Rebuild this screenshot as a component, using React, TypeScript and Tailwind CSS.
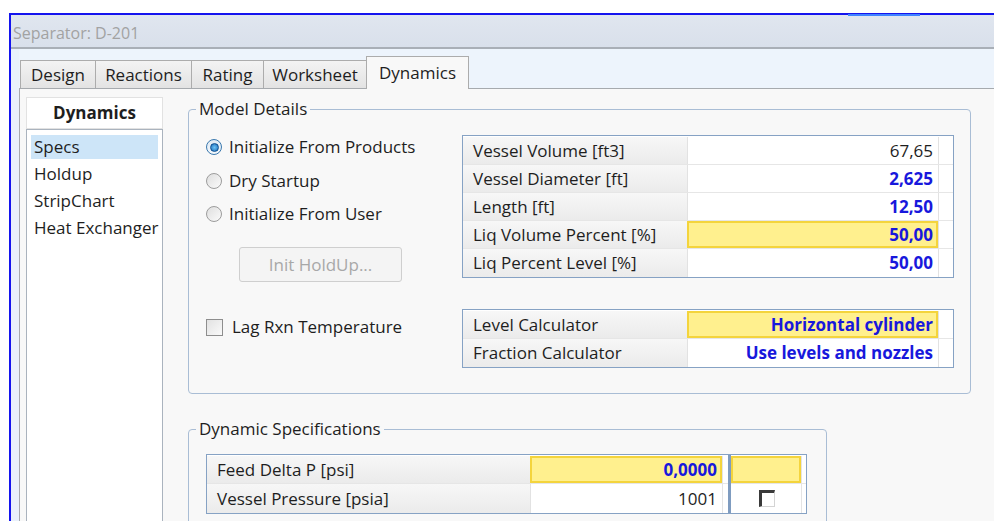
import React from 'react';

type Tone = 'calc' | 'spec' | 'focus';

interface PropRow {
  label: string;
  value: string;
  tone: Tone;
}

const modelRows: PropRow[] = [
  { label: 'Vessel Volume [ft3]', value: '67,65', tone: 'calc' },
  { label: 'Vessel Diameter [ft]', value: '2,625', tone: 'spec' },
  { label: 'Length [ft]', value: '12,50', tone: 'spec' },
  { label: 'Liq Volume Percent [%]', value: '50,00', tone: 'focus' },
  { label: 'Liq Percent Level [%]', value: '50,00', tone: 'spec' },
];

const calcRows: PropRow[] = [
  { label: 'Level Calculator', value: 'Horizontal cylinder', tone: 'focus' },
  { label: 'Fraction Calculator', value: 'Use levels and nozzles', tone: 'spec' },
];

const tabs = [
  { label: 'Design', w: 'w-[76px]' },
  { label: 'Reactions', w: 'w-[97px]' },
  { label: 'Rating', w: 'w-[73px]' },
  { label: 'Worksheet', w: 'w-[104px]' },
];

const pages = ['Specs', 'Holdup', 'StripChart', 'Heat Exchanger'];

export default function App() {
  return (
    <div className="w-[994px] h-[521px] overflow-hidden bg-white pt-[13px] pl-[9px] font-['Open_Sans','Noto_Sans',sans-serif] text-[17px] text-[#1e1e1e]">
      <div className="relative flex h-full flex-col border-l-2 border-t-2 border-[#1414ee]">
        <div className="absolute -top-[1px] left-[837px] h-[2px] w-[72px] bg-[#3f82ff]" />

        {/* title bar */}
        <div className="flex h-[34px] shrink-0 items-center border-b-2 border-[#a9afb7] bg-linear-to-b from-[#e0e6ef] to-[#d9e0eb] pl-[2px] pt-[3px] text-[16px] text-[#a2a2a2]">
          Separator: D-201
        </div>

        <div className="flex flex-1 flex-col bg-[#e9f1fb] pl-[8px]">
          {/* tab strip */}
          <div className="flex h-[39px] shrink-0 items-end bg-[#edf4fc] pl-px">
            {tabs.map((t) => (
              <div
                key={t.label}
                className={`${t.w} -mr-px flex h-[28px] items-center justify-center border border-b-0 border-[#acacac] bg-linear-to-b from-[#f3f3f3] to-[#e3e3e3] pt-px`}
              >
                {t.label}
              </div>
            ))}
            <div className="relative z-10 -mb-px flex h-[33px] w-[103px] items-center justify-center border border-b-0 border-[#acacac] bg-[#f8f8f8] pb-[1px]">
              Dynamics
            </div>
          </div>

          {/* page body */}
          <div className="flex flex-1 border-l border-t border-[#a6aaae] bg-[#f8f8f8] pl-[6px] pt-[8px]">
            <div className="flex w-[137px] shrink-0 flex-col">
              <div className="flex h-[32px] items-center justify-center border border-[#e2e2e2] bg-white font-bold">
                Dynamics
              </div>
              <div className="flex flex-1 flex-col gap-[3px] border border-[#aab3be] bg-white px-[4px] pt-[5px]">
                {pages.map((p, i) => (
                  <div
                    key={p}
                    className={`flex h-[24px] items-center whitespace-nowrap px-[3px] ${i === 0 ? 'bg-[#cde5f8]' : ''}`}
                  >
                    {p}
                  </div>
                ))}
              </div>
            </div>

            <div className="ml-[25px] flex flex-col">
              <GroupBox title="Model Details" className="mt-[1px] w-[783px] pb-[25px]">
                <div className="flex items-start pl-[17px] pt-[15px]">
                  <div className="flex w-[256px] flex-col">
                    <div className="mt-px flex flex-col gap-[11.5px]">
                      <Radio label="Initialize From Products" checked />
                      <Radio label="Dry Startup" />
                      <Radio label="Initialize From User" />
                    </div>
                    <button className="ml-[33px] mt-[22px] h-[35px] w-[163px] rounded-[3px] border border-[#cfcfcf] bg-[#f4f4f4] text-[#a8a8a8]">
                      Init HoldUp...
                    </button>
                    <div className="mt-[34px] flex h-[22px] items-center">
                      <div className="h-[17px] w-[17px] border border-[#8e8e8e] bg-linear-to-br from-[#e2e2e2] to-[#fafafa]" />
                      <span className="ml-[9px]">Lag Rxn Temperature</span>
                    </div>
                  </div>
                  <div className="flex flex-col gap-[31px]">
                    <PropTable rows={modelRows} />
                    <PropTable rows={calcRows} />
                  </div>
                </div>
              </GroupBox>

              <GroupBox title="Dynamic Specifications" className="mt-[24px] h-[200px] w-[639px]">
                <div className="pl-[17px] pt-[14px]">
                  <div className="flex w-[601px] border border-[#86a2c4] bg-white pt-px">
                    <div className="flex flex-col">
                      <div className="flex h-[28px] border-b border-[#e6e6e6]">
                        <LabelCell label="Feed Delta P [psi]" width="w-[323px]" />
                        <ValueCell value="0,0000" tone="focus" width="w-[192px]" />
                        <div className="w-[6px] border-l border-[#e4e4e4]" />
                      </div>
                      <div className="flex h-[29px]">
                        <LabelCell label="Vessel Pressure [psia]" width="w-[323px]" />
                        <ValueCell value="1001" tone="calc" width="w-[192px]" />
                        <div className="w-[6px] border-l border-[#e4e4e4]" />
                      </div>
                    </div>
                    <div className="-mt-px w-[3px] bg-[#7f9cc0]" />
                    <div className="flex flex-col">
                      <div className="flex h-[28px] border-b border-[#e6e6e6]">
                        <div className="w-[70px] border-2 border-[#f4d43c] bg-[#fff08e]" />
                        <div className="w-[5px] border-l border-[#e4e4e4]" />
                      </div>
                      <div className="flex h-[29px]">
                        <div className="flex w-[70px] items-center justify-center pl-[2px]">
                          <div className="h-[17px] w-[16px] border-l-[3px] border-t-[3px] border-r border-b border-l-[#3a3a3a] border-t-[#3a3a3a] border-r-[#d4d4d4] border-b-[#d4d4d4] bg-white" />
                        </div>
                        <div className="w-[5px] border-l border-[#e4e4e4]" />
                      </div>
                    </div>
                  </div>
                </div>
              </GroupBox>
            </div>
          </div>
        </div>
      </div>
    </div>
  );
}

// --- pieces ---

const GroupBox = ({
  title,
  className,
  children,
}: {
  title: string;
  className?: string;
  children: React.ReactNode;
}) => (
  <fieldset className={`rounded-[4px] border border-[#a9bdd5] ${className}`}>
    <legend className="ml-[7px] px-[3px] leading-[22px]">{title}</legend>
    {children}
  </fieldset>
);

const Radio = ({ label, checked }: { label: string; checked?: boolean }) => (
  <div className="flex h-[22px] items-center">
    {checked ? (
      <div className="flex h-[16px] w-[16px] items-center justify-center rounded-full border border-[#3a78ae] bg-linear-to-b from-[#dfe9f3] to-[#f4f8fc]">
        <div className="h-[9px] w-[9px] rounded-full border border-[#0d4f8f] bg-radial from-[#6cc4f6] to-[#1667b5]" />
      </div>
    ) : (
      <div className="h-[16px] w-[16px] rounded-full border border-[#9c9c9c] bg-linear-to-br from-[#dedede] to-[#fbfbfb]" />
    )}
    <span className="ml-[7px]">{label}</span>
  </div>
);

const LabelCell = ({ label, width }: { label: string; width: string }) => (
  <div className={`${width} flex h-full items-center bg-linear-to-b from-[#f7f7f7] to-[#ebebeb] pl-[10px]`}>
    {label}
  </div>
);

const ValueCell = ({ value, tone, width }: { value: string; tone: Tone; width: string }) => (
  <div
    className={`${width} flex h-full items-center justify-end ${
      tone === 'focus'
        ? 'border-2 border-[#f4d43c] bg-[#fff08e] pr-[3px]'
        : 'border-l border-[#e2e2e2] bg-white pr-[5px]'
    } ${tone === 'calc' ? 'text-[#1e1e1e]' : 'font-bold text-[#1818dc]'}`}
  >
    {value}
  </div>
);

const PropTable = ({ rows }: { rows: PropRow[] }) => (
  <div className="flex w-[492px] flex-col border border-[#86a2c4] bg-white pt-px">
    {rows.map((r, i) => (
      <div
        key={r.label}
        className={`flex h-[28px] ${i < rows.length - 1 ? 'border-b border-[#e6e6e6]' : ''}`}
      >
        <LabelCell label={r.label} width="w-[224px]" />
        <ValueCell value={r.value} tone={r.tone} width="w-[251px]" />
        <div className="w-[15px] border-l border-[#e2e2e2] bg-white" />
      </div>
    ))}
  </div>
);
